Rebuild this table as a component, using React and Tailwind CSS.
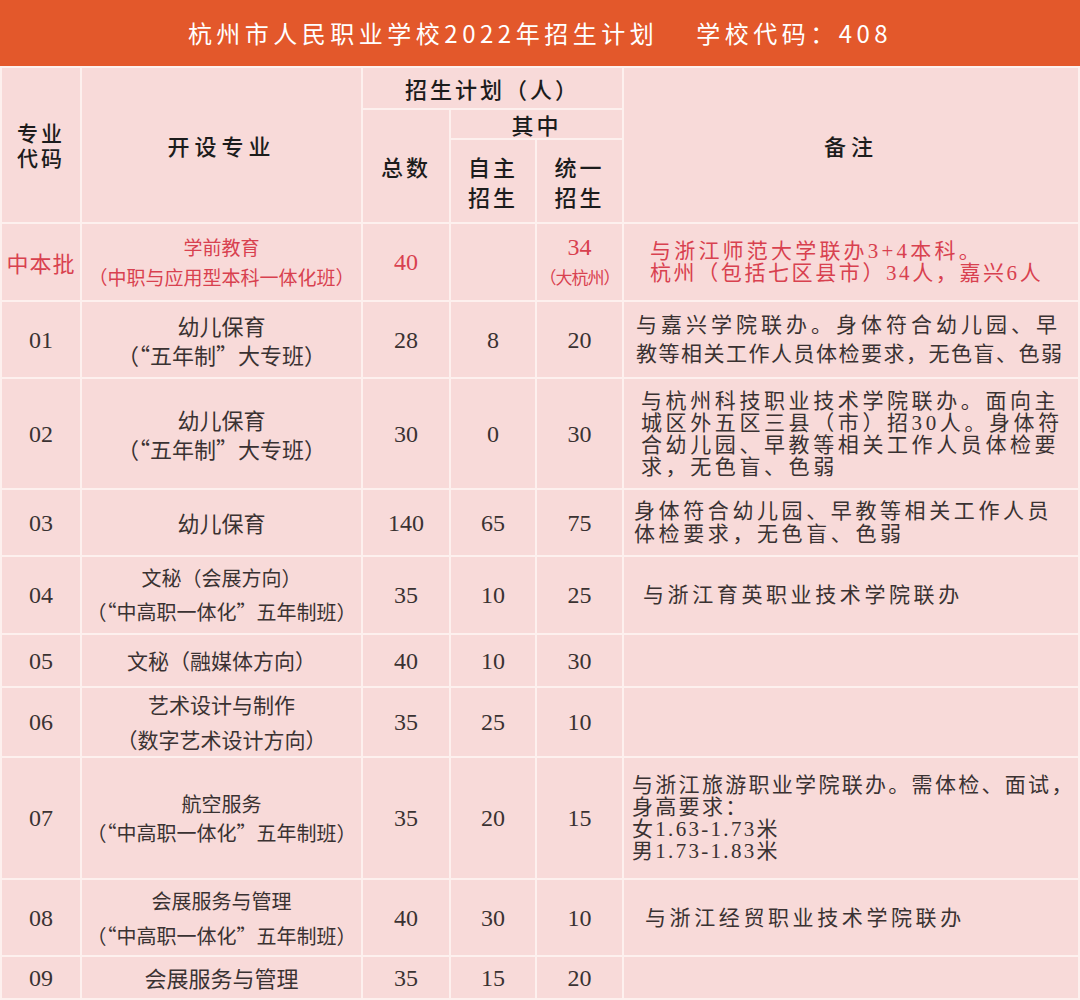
import React from 'react'

const SANS = "font-['Noto_Sans_CJK_SC',sans-serif]"
const SERIF = "font-['Liberation_Serif','Noto_Sans_CJK_SC',serif]"

// body rows: code, major lines, numbers, note lines ([text, extra classes])
const ROWS = [
  {
    code: '中本批', red: true,
    name: ['学前教育', '（中职与应用型本科一体化班）'], nameSize: 'text-[19px] leading-[30px]',
    total: '40', self: '', unified: ['34', '（大杭州）'],
    note: [['与浙江师范大学联办3+4本科。', 'tracking-[3.2px]'], ['杭州（包括七区县市）34人，嘉兴6人', 'tracking-[2.6px]']], notePad: 'pl-[26px]',
  },
  {
    code: '01', name: ['幼儿保育', '（“五年制”大专班）'], nameSize: 'text-[22px] leading-[29px]',
    total: '28', self: '8', unified: ['20'],
    note: [['与嘉兴学院联办。身体符合幼儿园、早', 'tracking-[4px]'], ['教等相关工作人员体检要求，无色盲、色弱', 'tracking-[1.5px]']], notePad: 'pl-[12px]', noteLead: 'leading-[29px]',
  },
  {
    code: '02', name: ['幼儿保育', '（“五年制”大专班）'], nameSize: 'text-[22px] leading-[29px]',
    total: '30', self: '0', unified: ['30'],
    note: [['与杭州科技职业技术学院联办。面向主'], ['城区外五区三县（市）招30人。身体符'], ['合幼儿园、早教等相关工作人员体检要'], ['求，无色盲、色弱']], notePad: 'pl-[17px]', noteTrack: 'tracking-[3.6px]',
  },
  {
    code: '03', name: ['幼儿保育'], nameSize: 'text-[22px] leading-[29px]',
    total: '140', self: '65', unified: ['75'],
    note: [['身体符合幼儿园、早教等相关工作人员'], ['体检要求，无色盲、色弱']], notePad: 'pl-[10px]', noteTrack: 'tracking-[3.6px]', noteLead: 'leading-[23px]',
  },
  {
    code: '04', name: ['文秘（会展方向）', '（“中高职一体化”五年制班）'], nameSize: 'text-[20px] leading-[34px]',
    total: '35', self: '10', unified: ['25'],
    note: [['与浙江育英职业技术学院联办']], notePad: 'pl-[19px]', noteTrack: 'tracking-[3.6px]',
  },
  {
    code: '05', name: ['文秘（融媒体方向）'], nameSize: 'text-[21px] leading-[29px]',
    total: '40', self: '10', unified: ['30'], note: [],
  },
  {
    code: '06', name: ['艺术设计与制作', '（数字艺术设计方向）'], nameSize: 'text-[21px] leading-[35px]',
    total: '35', self: '25', unified: ['10'], note: [],
  },
  {
    code: '07', name: ['航空服务', '（“中高职一体化”五年制班）'], nameSize: 'text-[20px] leading-[29px]',
    total: '35', self: '20', unified: ['15'],
    note: [['与浙江旅游职业学院联办。需体检、面试，'], ['身高要求：'], ['女1.63-1.73米'], ['男1.73-1.83米']], notePad: 'pl-[8px]', noteTrack: 'tracking-[2.3px]',
  },
  {
    code: '08', name: ['会展服务与管理', '（“中高职一体化”五年制班）'], nameSize: 'text-[20px] leading-[35px]',
    total: '40', self: '30', unified: ['10'],
    note: [['与浙江经贸职业技术学院联办']], notePad: 'pl-[21px]', noteTrack: 'tracking-[3.6px]',
  },
  {
    code: '09', name: ['会展服务与管理'], nameSize: 'text-[22px] leading-[29px]',
    total: '35', self: '15', unified: ['20'], note: [],
  },
]

function Cell({ className = '', children }) {
  return (
    <div className={`bg-[#f8dad9] flex flex-col items-center justify-center text-center ${className}`}>
      {children}
    </div>
  )
}

function Num({ value, red }) {
  return (
    <Cell className={`${SERIF} text-[24px] ${red ? 'text-[#d8414f]' : 'text-[#3a3232]'}`}>{value}</Cell>
  )
}

const HEAD = `${SANS} text-[22px] text-[#1c1c1c] font-medium`

export default function App() {
  return (
    <div className="w-[1080px] h-[1000px] bg-[#f8dad9] overflow-hidden">
      <div className={`${SANS} h-[66px] bg-[#e3582b] flex items-center justify-center text-white text-[24px] tracking-[4.5px]`}>
        <span>杭州市人民职业学校2022年招生计划</span>
        <span className="ml-[38px]">学校代码：408</span>
      </div>

      <div className="grid grid-cols-[78px_279px_86px_84px_85px_454px] grid-rows-[40px_28px_82px_76px_75px_109px_65px_76px_51px_68px_120px_75px_41px] gap-[2px] p-[2px] bg-[#fdf0ee]">
        {/* header */}
        <Cell className={`${SANS} text-[21px] text-[#1c1c1c] font-medium row-span-3 leading-[25px] tracking-[3px]`}>
          <span>专业</span>
          <span>代码</span>
        </Cell>
        <Cell className={`${HEAD} row-span-3 tracking-[5px]`}>开设专业</Cell>
        <Cell className={`${HEAD} col-span-3 tracking-[3px]`}>招生计划（人）</Cell>
        <Cell className={`${HEAD} row-span-3 tracking-[5px]`}>备注</Cell>
        <Cell className={`${HEAD} row-span-2 tracking-[3px]`}>总数</Cell>
        <Cell className={`${HEAD} col-span-2 tracking-[3px]`}>其中</Cell>
        <Cell className={`${HEAD} leading-[30px] tracking-[3px]`}>
          <span>自主</span>
          <span>招生</span>
        </Cell>
        <Cell className={`${HEAD} leading-[30px] tracking-[3px]`}>
          <span>统一</span>
          <span>招生</span>
        </Cell>

        {/* body */}
        {ROWS.map(r => {
          const color = r.red ? 'text-[#d8414f]' : 'text-[#3a3232]'
          return (
            <React.Fragment key={r.code}>
              {r.red ? (
                <Cell className={`${SANS} text-[22px] tracking-[1px] ${color}`}>{r.code}</Cell>
              ) : (
                <Num value={r.code} />
              )}
              <Cell className={`${SANS} ${r.nameSize} ${color} whitespace-nowrap`}>
                {r.name.map(n => <span key={n}>{n}</span>)}
              </Cell>
              <Num value={r.total} red={r.red} />
              <Num value={r.self} red={r.red} />
              <Cell className={`${SERIF} ${color} leading-[30px]`}>
                <span className="text-[24px]">{r.unified[0]}</span>
                {r.unified[1] && <span className={`${SANS} text-[17px] tracking-[-1px]`}>{r.unified[1]}</span>}
              </Cell>
              <div className={`bg-[#f8dad9] flex flex-col justify-center ${SERIF} text-[21px] ${r.noteLead || 'leading-[22px]'} ${r.noteTrack || ''} ${r.notePad || ''} ${color}`}>
                {r.note.map(([text, cls]) => (
                  <span key={text} className={`whitespace-nowrap ${cls || ''}`}>{text}</span>
                ))}
              </div>
            </React.Fragment>
          )
        })}
      </div>
    </div>
  )
}
